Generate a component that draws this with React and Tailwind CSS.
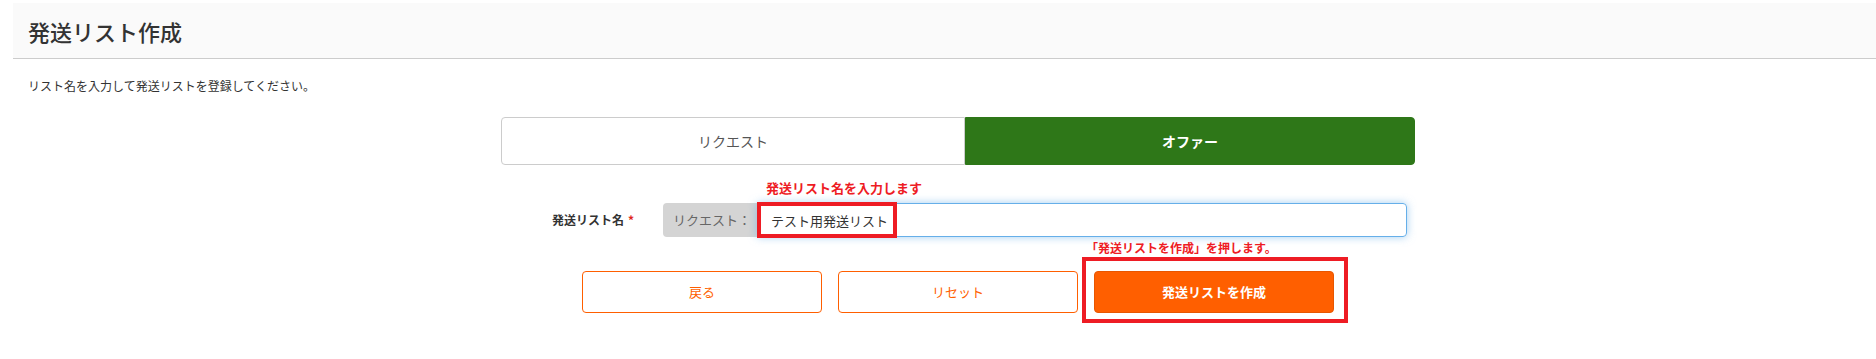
import React, { useState } from "react";

const font = { fontFamily: '"Noto Sans CJK JP", "Noto Sans", sans-serif' };

const App = () => {
	const [tab, setTab] = useState("offer");
	const [listName, setListName] = useState("テスト用発送リスト");

	return (
		<div className="w-[1876px] h-[359px] bg-white overflow-hidden pt-[3px]" style={font}>
			{/* ヘッダー */}
			<div className="ml-[13px] h-[56px] bg-[#fafafa] border-b border-[#cccccc] flex items-center pl-[15px]">
				<h1 className="text-[22px] font-medium text-[#333333] leading-none">発送リスト作成</h1>
			</div>

			<p className="mt-[21px] ml-[28px] text-[12px] text-[#333333] leading-none">
				リスト名を入力して発送リストを登録してください。
			</p>

			<div className="ml-[501px] w-[914px]">
				{/* タブ */}
				<div className="mt-[25px] flex h-[48px]">
					<button
						onClick={() => setTab("request")}
						className={`w-[464px] flex items-center justify-center text-[14px] rounded-l-[4px] border ${
							tab === "request"
								? "bg-[#2e7718] border-[#2e7718] text-white font-bold"
								: "bg-white border-[#cccccc] text-[#555555]"
						}`}
					>
						リクエスト
					</button>
					<button
						onClick={() => setTab("offer")}
						className={`w-[450px] flex items-center justify-center text-[14px] rounded-r-[4px] border ${
							tab === "offer"
								? "bg-[#2e7718] border-[#2e7718] text-white font-bold"
								: "bg-white border-[#cccccc] text-[#555555]"
						}`}
					>
						オファー
					</button>
				</div>

				{/* リスト名 */}
				<div className="mt-[38px] flex items-center h-[34px]">
					<div className="w-[162px] pl-[51px] text-[12px] font-bold text-[#333333] flex items-center">
						発送リスト名
						<span className="ml-[4px] text-[#e0261c]">*</span>
					</div>
					<div className="w-[94px] h-[34px] bg-[#d4d4d4] rounded-l-[4px] flex items-center pl-[10px] text-[13px] text-[#666666]">
						リクエスト：
					</div>
					<div className="relative w-[650px] h-[34px]">
						<input
							type="text"
							value={listName}
							onChange={(e) => setListName(e.target.value)}
							className="w-full h-full border border-[#66afe9] rounded-r-[4px] pl-[13px] text-[13px] text-[#333333] outline-none shadow-[0_0_8px_rgba(102,175,233,0.6)]"
							style={font}
						/>
						{/* 注釈 */}
						<div className="absolute left-[9px] top-[-22px] text-[13px] font-bold text-[#ee1c24] whitespace-nowrap leading-none">
							発送リスト名を入力します
						</div>
						<div className="absolute left-0 top-[-1px] w-[140px] h-[36px] border-[4px] border-[#ee1c24] pointer-events-none" />
					</div>
				</div>

				{/* ボタン */}
				<div className="mt-[34px] ml-[81px] flex gap-[16px]">
					<button className="w-[240px] h-[42px] bg-white border border-[#ff5f00] rounded-[4px] text-[13px] text-[#ff5f00]">
						戻る
					</button>
					<button
						onClick={() => setListName("")}
						className="w-[240px] h-[42px] bg-white border border-[#ff5f00] rounded-[4px] text-[13px] text-[#ff5f00]"
					>
						リセット
					</button>
					<div className="relative">
						<button className="w-[240px] h-[42px] bg-[#ff5f00] border border-[#e85600] rounded-[4px] text-[13px] font-bold text-white">
							発送リストを作成
						</button>
						<div className="absolute left-[-8px] top-[-29px] text-[12px] font-bold text-[#ee1c24] whitespace-nowrap leading-none">
							「発送リストを作成」を押します。
						</div>
						<div className="absolute left-[-12px] top-[-14px] w-[266px] h-[66px] border-[4px] border-[#ee1c24] pointer-events-none" />
					</div>
				</div>
			</div>
		</div>
	);
};

export default App;
